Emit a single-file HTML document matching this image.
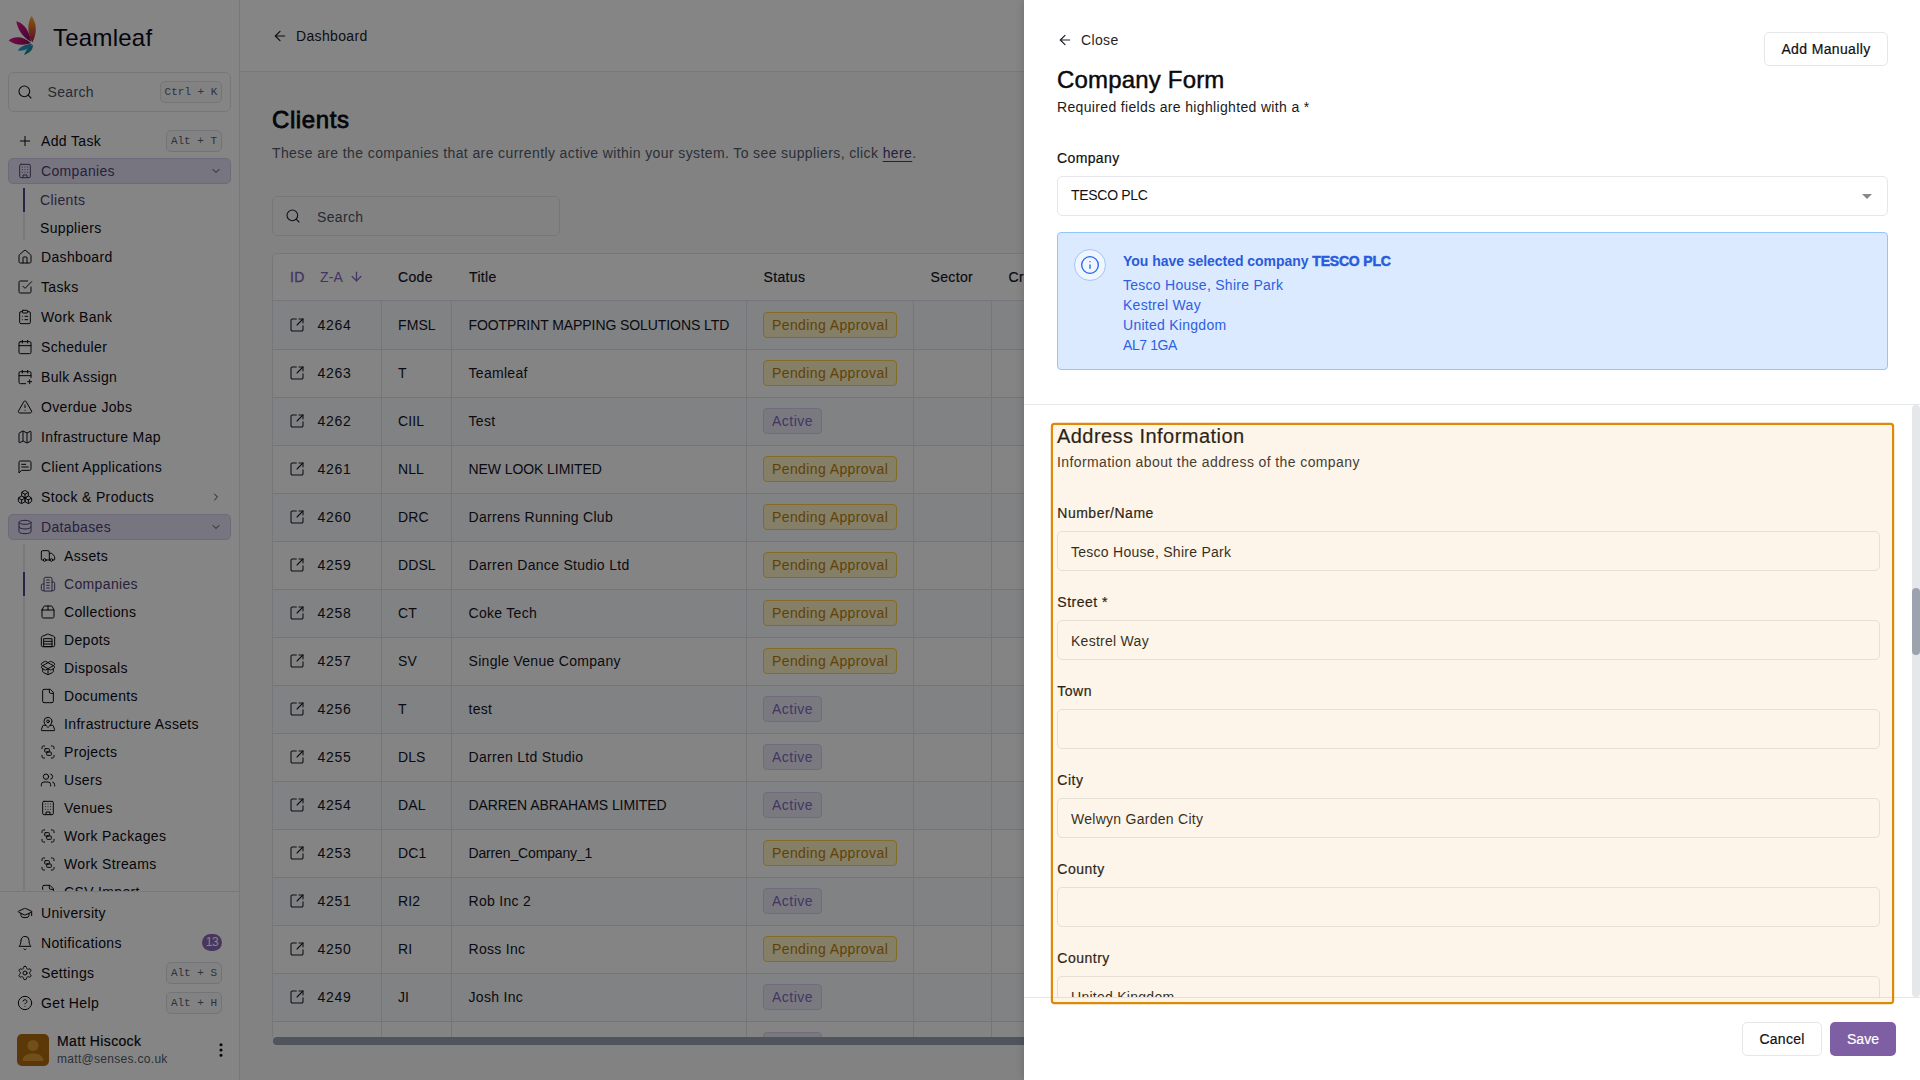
<!DOCTYPE html><html lang="en"><head><meta charset="utf-8"><title>Teamleaf - Clients</title><style>
*{box-sizing:border-box;margin:0;padding:0}
html,body{width:1920px;height:1080px;overflow:hidden;background:#fff}
body{font-family:"Liberation Sans",sans-serif;font-size:14px;line-height:20px;color:#0b0b14;letter-spacing:.35px;position:relative}
.abs{position:absolute}
svg.ic{display:block;flex:none}
.med{-webkit-text-stroke:.2px currentColor}
/* sidebar */
#sb{position:absolute;left:0;top:0;width:240px;height:1080px;background:#fff;border-right:1px solid #e5e7eb}
#logo{position:absolute;left:8px;top:16px}
#brand{position:absolute;left:53px;top:22px;font-size:24px;line-height:32px;letter-spacing:.25px;color:#0a0a1a}
#sbsearch{position:absolute;left:8px;top:72px;width:223px;height:40px;border:1px solid #e2e4ea;border-radius:6px;color:#4b5263}
#sbsearch svg{position:absolute;left:8px;top:11px;color:#15151f}
#sbsearch span.t{position:absolute;left:38.500px;top:9px}
kbd{position:absolute;font-family:"Liberation Mono",monospace;font-size:11px;line-height:21px;letter-spacing:0;color:#5b6170;border:1px solid #dcdfe6;border-radius:5px;height:22px;text-align:center;background:#fafafb}
.nav{position:absolute;left:8px;width:223px;height:26px;border-radius:5px;display:flex;align-items:center;padding-left:8px;color:#0b0b14;border:1px solid transparent}
.nav .ic{margin-right:8px}
.nav.act{background:#e5e0f3;border-color:#d3cbec;color:#4f4175}
.nav .chev{position:absolute;right:8px;top:6px;color:#3a3a4a;margin:0}
.sub{position:absolute;height:24px;display:flex;align-items:center;color:#0b0b14}
.sub .ic{margin-right:8px}
.sub.act{color:#4f4175}
.rail{position:absolute;left:23px;width:2px;background:#e9eaef}
.bar{position:absolute;left:23px;width:2px;background:#54407f}
#sbline{position:absolute;left:0;top:891px;width:239px;height:1px;background:#e5e7eb}
#sbclip{position:absolute;left:0;top:128px;width:239px;height:763px;overflow:hidden}
#badge{position:absolute;left:202px;top:934px;width:20px;height:17px;border-radius:9px;background:#8968b5;color:#fff;font-size:12px;line-height:17px;text-align:center;letter-spacing:-.5px}
#avatar{position:absolute;left:17px;top:1034px;width:32px;height:32px;border-radius:5px;background:#b06c12;overflow:hidden}
#uname{position:absolute;left:57px;top:1031px;color:#0b0b14}
#umail{position:absolute;left:57px;top:1050px;font-size:12px;line-height:18px;color:#565c6b;letter-spacing:.3px}
/* main */
#main{position:absolute;left:240px;top:0;width:1680px;height:1080px;background:#f9fafb}
#hdr{position:absolute;left:0;top:0;width:1680px;height:72px;background:#fff;border-bottom:1px solid #e5e7eb}
#back{position:absolute;left:31.500px;top:28px;color:#1c1c28}
#backt{position:absolute;left:56px;top:26px;color:#1c1c28}
#h1{position:absolute;left:32px;top:104px;font-size:24px;line-height:32px;font-weight:400;letter-spacing:.6px;color:#0a0a14;-webkit-text-stroke:.8px currentColor}
#subt{position:absolute;left:32px;top:143px;color:#555b69;letter-spacing:.39px;white-space:nowrap}
#subt a{color:#4a3a78;text-decoration:underline;text-underline-offset:3px}
#msearch{position:absolute;left:32px;top:196px;width:288px;height:40px;border:1px solid #e2e4ea;border-radius:5px;background:#fafafb;color:#4b5263}
#msearch svg{position:absolute;left:12px;top:11px;color:#1c1c28}
#msearch span{position:absolute;left:44px;top:10px}
#tbl{isolation:isolate;position:absolute;left:32px;top:253px;width:1640px;height:784px;border:1px solid #e2e4ea;border-radius:5px 5px 0 0;border-bottom:none;overflow:hidden;background:#f6f7fa}
#thead{position:absolute;left:0;top:0;width:100%;height:47px;background:#fff;border-bottom:1px solid #e2e4ea}
#thead span{position:absolute;top:13px;color:#14141e}
.tr{position:absolute;left:0;width:100%;height:48px;border-bottom:1px solid #dfe1e7;background:#fefefe}
.tr.o{background:#f7f9fc}
.tr span{position:absolute;top:13px;white-space:nowrap;color:#14141e}
.tr svg{position:absolute;left:16px;top:15px;color:#1c1c28}
.vl{position:absolute;z-index:2;top:47px;width:1px;height:740px;background:#e0e2e8}
.bdg{position:absolute;left:490px;top:10px;height:26px;border-radius:4px;line-height:24px;padding:0 8px;border:1px solid;white-space:nowrap}
.bdg.p{background:#fdf3c4;border-color:#fbd149;color:#bd7f0e;letter-spacing:.4px}
.bdg.a{background:#ece8f6;border-color:#d6cdef;color:#7e68c0;letter-spacing:.5px}
#hsb{position:absolute;left:33px;top:1037px;width:1640px;height:8px;border-radius:4px;background:#9aa1b2}
/* overlay */
#ov{position:absolute;left:0;top:0;width:1024px;height:1080px;background:rgba(0,0,0,.478)}
/* panel */
#pn{position:absolute;left:1024px;top:0;width:896px;height:1080px;background:#fff;box-shadow:-2px 0 6px rgba(0,0,0,.12)}
#close{position:absolute;left:33px;top:32px;color:#1f1f28}
#closet{position:absolute;left:57px;top:30px;color:#1f1f28}
#addm{position:absolute;left:740px;top:32px;width:124px;height:34px;border:1px solid #e5e7eb;border-radius:5px;text-align:center;line-height:32px;color:#111;letter-spacing:.36px}
#ptitle{position:absolute;left:33px;top:64px;font-size:24px;line-height:32px;color:#0a0a0a;letter-spacing:.18px;-webkit-text-stroke:.45px currentColor}
#preq{position:absolute;left:33px;top:97px;color:#1a1a1a;letter-spacing:.34px}
#lcomp{position:absolute;left:33px;top:148px;color:#111;letter-spacing:.37px}
#sel{position:absolute;left:33px;top:176px;width:831px;height:40px;border:1px solid #e5e7eb;border-radius:5px}
#sel span{position:absolute;left:13px;top:8px;letter-spacing:-.3px;color:#111}
#sel i{position:absolute;right:15px;top:17px;width:0;height:0;border-left:5px solid transparent;border-right:5px solid transparent;border-top:5px solid #888}
#info{position:absolute;left:33px;top:232px;width:831px;height:138px;border:1px solid #93c5fd;border-radius:4px;background:#dbeafe;color:#2f5fe0}
#info .circ{position:absolute;left:16px;top:16px;width:32px;height:32px;border-radius:16px;background:#eff6ff;border:1px solid #a3c4fb;color:#2563eb}
#info .circ svg{position:absolute;left:5px;top:5px}
#info b{position:absolute;left:65px;top:18px;font-weight:700;letter-spacing:-.04px;white-space:nowrap;color:#2a5bdc}
#info p{position:absolute;left:65px;white-space:nowrap;letter-spacing:.27px}
#pdiv{position:absolute;left:0;top:404px;width:896px;height:1px;background:#e5e7eb}
#scr{position:absolute;left:0;top:405px;width:896px;height:592px;overflow:hidden}
#sbt{position:absolute;left:888px;top:405px;width:8px;height:592px;background:#e5e7eb;border-radius:4px}
#sbth{position:absolute;left:888px;top:588px;width:8px;height:67px;background:#9ca3af;border-radius:4px}
#fdiv{position:absolute;left:0;top:997px;width:896px;height:1px;background:#e5e7eb}
#atitle{position:absolute;left:33px;top:17px;font-size:20px;line-height:28px;color:#151515;letter-spacing:.45px;-webkit-text-stroke:.2px currentColor}
#asub{position:absolute;left:33px;top:47px;color:#333;letter-spacing:.39px}
.fl{position:absolute;left:33.300px;color:#151515;letter-spacing:.5px}
.fi{position:absolute;left:33px;width:823px;height:40px;border:1px solid #e5e7eb;border-radius:5px;background:#fff}
.fi span{position:absolute;left:13px;top:10px;color:#1f1f1f;white-space:nowrap;letter-spacing:.27px}
#cancel{position:absolute;left:718px;top:1022px;width:80px;height:34px;border:1px solid #e5e7eb;border-radius:5px;text-align:center;line-height:32px;color:#111;letter-spacing:.25px}
#save{position:absolute;left:806px;top:1022px;width:66px;height:34px;border-radius:5px;text-align:center;line-height:34px;color:#fff;background:#7e5fa3;letter-spacing:.05px}
#hl{position:absolute;left:1053.200px;top:425.100px;width:838.500px;height:576.700px;box-shadow:0 0 0 2.200px #dc8a08;border-radius:1.500px;background:rgba(235,155,35,.1)}
</style></head><body>
<aside id="sb">
<svg id="logo" width="28" height="40" viewBox="8 16 28 40">
<defs>
<linearGradient id="g1" x1="0" y1="0" x2="0" y2="1"><stop offset="0" stop-color="#fbb21a"/><stop offset=".45" stop-color="#e0682c"/><stop offset="1" stop-color="#a3174f"/></linearGradient>
<linearGradient id="g2" x1="0" y1="0" x2="1" y2="1"><stop offset="0" stop-color="#e0168f"/><stop offset="1" stop-color="#7a0d55"/></linearGradient>
<linearGradient id="g3" x1="0" y1="0" x2="1" y2="0"><stop offset="0" stop-color="#e0168f"/><stop offset="1" stop-color="#8a0c4c"/></linearGradient>
<linearGradient id="g4" x1="0" y1="1" x2="1" y2="0"><stop offset="0" stop-color="#1aa7d6"/><stop offset="1" stop-color="#2f7fb0"/></linearGradient>
<linearGradient id="g5" x1="0" y1="1" x2="1" y2="0"><stop offset="0" stop-color="#0f9c86"/><stop offset="1" stop-color="#2a7fb4"/></linearGradient>
</defs>
<path d="M31.600 16 C35.800 22 38.200 31 32.300 42.500 C27.300 33 27 23 31.600 16Z" fill="url(#g1)"/>
<path d="M16.300 21.200 C22 22.500 28.500 28 31.300 41.800 C22 37 17.800 29 16.300 21.200Z" fill="url(#g2)"/>
<path d="M8.600 40.400 C14 36 23 35.500 31 43.300 C22 46 14 44.500 8.600 40.400Z" fill="url(#g3)"/>
<path d="M17.900 50.500 C20 46.500 26 44 32 44 C29.500 49 23.500 51.500 17.900 50.500Z" fill="url(#g4)"/>
<path d="M24.100 54.900 C25.500 50.500 29 46.500 32.800 44.800 C33.500 49.500 29.500 53.500 24.100 54.900Z" fill="url(#g5)"/>
</svg>
<div id="brand">Teamleaf</div>
<div id="sbsearch"><svg class="ic" width="16" height="16" viewBox="0 0 24 24" fill="none" stroke="currentColor" stroke-width="1.6" stroke-linecap="round" stroke-linejoin="round" ><circle cx="11" cy="11" r="8"/><path d="m21 21-4.3-4.3"/></svg><span class="t">Search</span></div>
<kbd style="left:160px;top:81px;width:62px">Ctrl + K</kbd>
<div id="sbclip" style="top:0;height:891px">
<div class="nav" style="top:128px"><svg class="ic" width="16" height="16" viewBox="0 0 24 24" fill="none" stroke="currentColor" stroke-width="1.5" stroke-linecap="round" stroke-linejoin="round" ><path d="M5 12h14"/><path d="M12 5v14"/></svg><span>Add Task</span></div>
<kbd style="left:166px;top:130px;width:56px">Alt + T</kbd>
<div class="nav act" style="top:158px"><svg class="ic" width="16" height="16" viewBox="0 0 24 24" fill="none" stroke="currentColor" stroke-width="1.5" stroke-linecap="round" stroke-linejoin="round" ><rect width="16" height="20" x="4" y="2" rx="2" ry="2"/><path d="M9 22v-4h6v4"/><path d="M8 6h.01"/><path d="M16 6h.01"/><path d="M12 6h.01"/><path d="M12 10h.01"/><path d="M12 14h.01"/><path d="M16 10h.01"/><path d="M16 14h.01"/><path d="M8 10h.01"/><path d="M8 14h.01"/></svg><span>Companies</span><svg class="ic chev" width="12" height="12" viewBox="0 0 24 24" fill="none" stroke="currentColor" stroke-width="2" stroke-linecap="round" stroke-linejoin="round" ><path d="m6 9 6 6 6-6"/></svg></div>
<div class="rail" style="top:188px;height:52px"></div><div class="bar" style="top:188px;height:24px"></div>
<div class="sub act" style="left:40px;top:188px"><span>Clients</span></div>
<div class="sub" style="left:40px;top:216px"><span>Suppliers</span></div>
<div class="nav" style="top:244px"><svg class="ic" width="16" height="16" viewBox="0 0 24 24" fill="none" stroke="currentColor" stroke-width="1.5" stroke-linecap="round" stroke-linejoin="round" ><path d="M15 21v-8a1 1 0 0 0-1-1h-4a1 1 0 0 0-1 1v8"/><path d="M3 10a2 2 0 0 1 .709-1.528l7-5.999a2 2 0 0 1 2.582 0l7 5.999A2 2 0 0 1 21 10v9a2 2 0 0 1-2 2H5a2 2 0 0 1-2-2z"/></svg><span>Dashboard</span></div>
<div class="nav" style="top:274px"><svg class="ic" width="16" height="16" viewBox="0 0 24 24" fill="none" stroke="currentColor" stroke-width="1.5" stroke-linecap="round" stroke-linejoin="round" ><path d="m9 11 3 3L22 4"/><path d="M21 12v7a2 2 0 0 1-2 2H5a2 2 0 0 1-2-2V5a2 2 0 0 1 2-2h11"/></svg><span>Tasks</span></div>
<div class="nav" style="top:304px"><svg class="ic" width="16" height="16" viewBox="0 0 24 24" fill="none" stroke="currentColor" stroke-width="1.5" stroke-linecap="round" stroke-linejoin="round" ><rect width="8" height="4" x="8" y="2" rx="1" ry="1"/><path d="M16 4h2a2 2 0 0 1 2 2v14a2 2 0 0 1-2 2H6a2 2 0 0 1-2-2V6a2 2 0 0 1 2-2h2"/><path d="M12 11h4"/><path d="M12 16h4"/><path d="M8 11h.01"/><path d="M8 16h.01"/></svg><span>Work Bank</span></div>
<div class="nav" style="top:334px"><svg class="ic" width="16" height="16" viewBox="0 0 24 24" fill="none" stroke="currentColor" stroke-width="1.5" stroke-linecap="round" stroke-linejoin="round" ><path d="M8 2v4"/><path d="M16 2v4"/><rect width="18" height="18" x="3" y="4" rx="2"/><path d="M3 10h18"/></svg><span>Scheduler</span></div>
<div class="nav" style="top:364px"><svg class="ic" width="16" height="16" viewBox="0 0 24 24" fill="none" stroke="currentColor" stroke-width="1.5" stroke-linecap="round" stroke-linejoin="round" ><path d="M8 2v4"/><path d="M16 2v4"/><path d="M21 13V6a2 2 0 0 0-2-2H5a2 2 0 0 0-2 2v14a2 2 0 0 0 2 2h8"/><path d="M3 10h18"/><path d="M16 19h6"/><path d="M19 16v6"/></svg><span>Bulk Assign</span></div>
<div class="nav" style="top:394px"><svg class="ic" width="16" height="16" viewBox="0 0 24 24" fill="none" stroke="currentColor" stroke-width="1.5" stroke-linecap="round" stroke-linejoin="round" ><path d="m21.73 18-8-14a2 2 0 0 0-3.48 0l-8 14A2 2 0 0 0 4 21h16a2 2 0 0 0 1.73-3"/><path d="M12 9v4"/><path d="M12 17h.01"/></svg><span>Overdue Jobs</span></div>
<div class="nav" style="top:424px"><svg class="ic" width="16" height="16" viewBox="0 0 24 24" fill="none" stroke="currentColor" stroke-width="1.5" stroke-linecap="round" stroke-linejoin="round" ><path d="M14.106 5.553a2 2 0 0 0 1.788 0l3.659-1.83A1 1 0 0 1 21 4.619v12.764a1 1 0 0 1-.553.894l-4.553 2.277a2 2 0 0 1-1.788 0l-4.212-2.106a2 2 0 0 0-1.788 0l-3.659 1.83A1 1 0 0 1 3 19.381V6.618a1 1 0 0 1 .553-.894l4.553-2.277a2 2 0 0 1 1.788 0z"/><path d="M15 5.764v15"/><path d="M9 3.236v15"/></svg><span>Infrastructure Map</span></div>
<div class="nav" style="top:454px"><svg class="ic" width="16" height="16" viewBox="0 0 24 24" fill="none" stroke="currentColor" stroke-width="1.5" stroke-linecap="round" stroke-linejoin="round" ><path d="M21 15a2 2 0 0 1-2 2H7l-4 4V5a2 2 0 0 1 2-2h14a2 2 0 0 1 2 2z"/><path d="M13 8H7"/><path d="M17 12H7"/></svg><span>Client Applications</span></div>
<div class="nav" style="top:484px"><svg class="ic" width="16" height="16" viewBox="0 0 24 24" fill="none" stroke="currentColor" stroke-width="1.5" stroke-linecap="round" stroke-linejoin="round" ><path d="M2.97 12.92A2 2 0 0 0 2 14.63v3.24a2 2 0 0 0 .97 1.71l3 1.8a2 2 0 0 0 2.06 0L12 19v-5.500l-5-3-4.030 2.420Z"/><path d="m7 16.5-4.740-2.850"/><path d="m7 16.5 5-3"/><path d="M7 16.500v5.170"/><path d="M12 13.500V19l3.970 2.380a2 2 0 0 0 2.060 0l3-1.800a2 2 0 0 0 .970-1.710v-3.240a2 2 0 0 0-.970-1.710L17 10.500l-5 3Z"/><path d="m17 16.500-5-3"/><path d="m17 16.500 4.740-2.850"/><path d="M17 16.500v5.170"/><path d="M7.970 4.420A2 2 0 0 0 7 6.130v4.370l5 3 5-3V6.130a2 2 0 0 0-.970-1.710l-3-1.800a2 2 0 0 0-2.060 0l-3 1.800Z"/><path d="M12 8 7.260 5.150"/><path d="m12 8 4.740-2.850"/><path d="M12 13.500V8"/></svg><span>Stock &amp; Products</span><svg class="ic chev" width="12" height="12" viewBox="0 0 24 24" fill="none" stroke="currentColor" stroke-width="2" stroke-linecap="round" stroke-linejoin="round" ><path d="m9 18 6-6-6-6"/></svg></div>
<div class="nav act" style="top:514px"><svg class="ic" width="16" height="16" viewBox="0 0 24 24" fill="none" stroke="currentColor" stroke-width="1.5" stroke-linecap="round" stroke-linejoin="round" ><ellipse cx="12" cy="5" rx="9" ry="3"/><path d="M3 5V19A9 3 0 0 0 21 19V5"/><path d="M3 12A9 3 0 0 0 21 12"/></svg><span>Databases</span><svg class="ic chev" width="12" height="12" viewBox="0 0 24 24" fill="none" stroke="currentColor" stroke-width="2" stroke-linecap="round" stroke-linejoin="round" ><path d="m6 9 6 6 6-6"/></svg></div>
<div class="rail" style="top:544px;height:360px"></div><div class="bar" style="top:572px;height:24px"></div>
<div class="sub" style="left:40px;top:544px"><svg class="ic" width="16" height="16" viewBox="0 0 24 24" fill="none" stroke="currentColor" stroke-width="1.5" stroke-linecap="round" stroke-linejoin="round" ><path d="M14 18V6a2 2 0 0 0-2-2H4a2 2 0 0 0-2 2v11a1 1 0 0 0 1 1h2"/><path d="M15 18H9"/><path d="M19 18h2a1 1 0 0 0 1-1v-3.650a1 1 0 0 0-.220-.624l-3.480-4.350A1 1 0 0 0 17.520 8H14"/><circle cx="17" cy="18" r="2"/><circle cx="7" cy="18" r="2"/></svg><span>Assets</span></div>
<div class="sub act" style="left:40px;top:572px"><svg class="ic" width="16" height="16" viewBox="0 0 24 24" fill="none" stroke="currentColor" stroke-width="1.5" stroke-linecap="round" stroke-linejoin="round" ><path d="M6 22V4a2 2 0 0 1 2-2h8a2 2 0 0 1 2 2v18Z"/><path d="M6 12H4a2 2 0 0 0-2 2v6a2 2 0 0 0 2 2h2"/><path d="M18 9h2a2 2 0 0 1 2 2v9a2 2 0 0 1-2 2h-2"/><path d="M10 6h4"/><path d="M10 10h4"/><path d="M10 14h4"/><path d="M10 18h4"/></svg><span>Companies</span></div>
<div class="sub" style="left:40px;top:600px"><svg class="ic" width="16" height="16" viewBox="0 0 24 24" fill="none" stroke="currentColor" stroke-width="1.5" stroke-linecap="round" stroke-linejoin="round" ><path d="M3 9h18v10a2 2 0 0 1-2 2H5a2 2 0 0 1-2-2V9Z"/><path d="m3 9 2.450-4.900A2 2 0 0 1 7.240 3h9.520a2 2 0 0 1 1.800 1.100L21 9"/><path d="M12 3v6"/></svg><span>Collections</span></div>
<div class="sub" style="left:40px;top:628px"><svg class="ic" width="16" height="16" viewBox="0 0 24 24" fill="none" stroke="currentColor" stroke-width="1.5" stroke-linecap="round" stroke-linejoin="round" ><path d="M22 8.350V20a2 2 0 0 1-2 2H4a2 2 0 0 1-2-2V8.350A2 2 0 0 1 3.260 6.500l8-3.200a2 2 0 0 1 1.480 0l8 3.200A2 2 0 0 1 22 8.350Z"/><path d="M6 18h12"/><path d="M6 14h12"/><rect width="12" height="12" x="6" y="10"/></svg><span>Depots</span></div>
<div class="sub" style="left:40px;top:656px"><svg class="ic" width="16" height="16" viewBox="0 0 24 24" fill="none" stroke="currentColor" stroke-width="1.5" stroke-linecap="round" stroke-linejoin="round" ><path d="M12 22v-9"/><path d="M15.170 2.210a1.670 1.670 0 0 1 1.630 0L21 4.570a1.930 1.930 0 0 1 0 3.360L8.820 14.790a1.655 1.655 0 0 1-1.640 0L3 12.430a1.930 1.930 0 0 1 0-3.360z"/><path d="M20 13v3.870a2.060 2.060 0 0 1-1.110 1.830l-6 3.080a1.930 1.930 0 0 1-1.780 0l-6-3.080A2.060 2.060 0 0 1 4 16.870V13"/><path d="M21 12.430a1.930 1.930 0 0 0 0-3.360L8.830 2.200a1.640 1.640 0 0 0-1.630 0L3 4.570a1.930 1.930 0 0 0 0 3.360l12.180 6.860a1.636 1.636 0 0 0 1.630 0z"/></svg><span>Disposals</span></div>
<div class="sub" style="left:40px;top:684px"><svg class="ic" width="16" height="16" viewBox="0 0 24 24" fill="none" stroke="currentColor" stroke-width="1.5" stroke-linecap="round" stroke-linejoin="round" ><path d="M15 2H6a2 2 0 0 0-2 2v16a2 2 0 0 0 2 2h12a2 2 0 0 0 2-2V7Z"/><path d="M14 2v4a2 2 0 0 0 2 2h4"/></svg><span>Documents</span></div>
<div class="sub" style="left:40px;top:712px"><svg class="ic" width="16" height="16" viewBox="0 0 24 24" fill="none" stroke="currentColor" stroke-width="1.5" stroke-linecap="round" stroke-linejoin="round" ><path d="M18 8c0 3.613-3.869 7.429-5.393 8.795a1 1 0 0 1-1.214 0C9.870 15.429 6 11.613 6 8a6 6 0 0 1 12 0"/><circle cx="12" cy="8" r="2"/><path d="M8.714 14h-3.710a1 1 0 0 0-.948.683l-2.004 6A1 1 0 0 0 3 22h18a1 1 0 0 0 .948-1.316l-2-6a1 1 0 0 0-.949-.684h-3.712"/></svg><span>Infrastructure Assets</span></div>
<div class="sub" style="left:40px;top:740px"><svg class="ic" width="16" height="16" viewBox="0 0 24 24" fill="none" stroke="currentColor" stroke-width="1.5" stroke-linecap="round" stroke-linejoin="round" ><path d="M3 7V5c0-1.100.900-2 2-2h2"/><path d="M17 3h2c1.100 0 2 .900 2 2v2"/><path d="M21 17v2c0 1.100-.900 2-2 2h-2"/><path d="M7 21H5c-1.100 0-2-.900-2-2v-2"/><rect width="7" height="5" x="7" y="7" rx="1"/><rect width="7" height="5" x="10" y="12" rx="1"/></svg><span>Projects</span></div>
<div class="sub" style="left:40px;top:768px"><svg class="ic" width="16" height="16" viewBox="0 0 24 24" fill="none" stroke="currentColor" stroke-width="1.5" stroke-linecap="round" stroke-linejoin="round" ><path d="M16 21v-2a4 4 0 0 0-4-4H6a4 4 0 0 0-4 4v2"/><circle cx="9" cy="7" r="4"/><path d="M22 21v-2a4 4 0 0 0-3-3.870"/><path d="M16 3.130a4 4 0 0 1 0 7.750"/></svg><span>Users</span></div>
<div class="sub" style="left:40px;top:796px"><svg class="ic" width="16" height="16" viewBox="0 0 24 24" fill="none" stroke="currentColor" stroke-width="1.5" stroke-linecap="round" stroke-linejoin="round" ><rect width="16" height="20" x="4" y="2" rx="2" ry="2"/><path d="M9 22v-4h6v4"/><path d="M8 6h.01"/><path d="M16 6h.01"/><path d="M12 6h.01"/><path d="M12 10h.01"/><path d="M12 14h.01"/><path d="M16 10h.01"/><path d="M16 14h.01"/><path d="M8 10h.01"/><path d="M8 14h.01"/></svg><span>Venues</span></div>
<div class="sub" style="left:40px;top:824px"><svg class="ic" width="16" height="16" viewBox="0 0 24 24" fill="none" stroke="currentColor" stroke-width="1.5" stroke-linecap="round" stroke-linejoin="round" ><path d="M3 7V5c0-1.100.900-2 2-2h2"/><path d="M17 3h2c1.100 0 2 .900 2 2v2"/><path d="M21 17v2c0 1.100-.900 2-2 2h-2"/><path d="M7 21H5c-1.100 0-2-.900-2-2v-2"/><rect width="7" height="5" x="7" y="7" rx="1"/><rect width="7" height="5" x="10" y="12" rx="1"/></svg><span>Work Packages</span></div>
<div class="sub" style="left:40px;top:852px"><svg class="ic" width="16" height="16" viewBox="0 0 24 24" fill="none" stroke="currentColor" stroke-width="1.5" stroke-linecap="round" stroke-linejoin="round" ><path d="M3 7V5c0-1.100.900-2 2-2h2"/><path d="M17 3h2c1.100 0 2 .900 2 2v2"/><path d="M21 17v2c0 1.100-.900 2-2 2h-2"/><path d="M7 21H5c-1.100 0-2-.900-2-2v-2"/><rect width="7" height="5" x="7" y="7" rx="1"/><rect width="7" height="5" x="10" y="12" rx="1"/></svg><span>Work Streams</span></div>
<div class="sub" style="left:40px;top:880px"><svg class="ic" width="16" height="16" viewBox="0 0 24 24" fill="none" stroke="currentColor" stroke-width="1.5" stroke-linecap="round" stroke-linejoin="round" ><path d="M4 22h14a2 2 0 0 0 2-2V7l-5-5H6a2 2 0 0 0-2 2v4"/><path d="M14 2v4a2 2 0 0 0 2 2h4"/><path d="M2 15h10"/><path d="m9 18 3-3-3-3"/></svg><span>CSV Import</span></div>
</div>
<div id="sbline"></div>
<div class="nav" style="top:900px"><svg class="ic" width="16" height="16" viewBox="0 0 24 24" fill="none" stroke="currentColor" stroke-width="1.5" stroke-linecap="round" stroke-linejoin="round" ><path d="M21.420 10.922a1 1 0 0 0-.019-1.838L12.830 5.180a2 2 0 0 0-1.660 0L2.600 9.080a1 1 0 0 0 0 1.832l8.570 3.908a2 2 0 0 0 1.660 0z"/><path d="M22 10v6"/><path d="M6 12.500V16a6 3 0 0 0 12 0v-3.500"/></svg><span>University</span></div>
<div class="nav" style="top:930px"><svg class="ic" width="16" height="16" viewBox="0 0 24 24" fill="none" stroke="currentColor" stroke-width="1.5" stroke-linecap="round" stroke-linejoin="round" ><path d="M6 8a6 6 0 0 1 12 0c0 7 3 9 3 9H3s3-2 3-9"/><path d="M10.300 21a1.940 1.940 0 0 0 3.400 0"/></svg><span>Notifications</span></div>
<div id="badge">13</div>
<div class="nav" style="top:960px"><svg class="ic" width="16" height="16" viewBox="0 0 24 24" fill="none" stroke="currentColor" stroke-width="1.5" stroke-linecap="round" stroke-linejoin="round" ><path d="M12.220 2h-.440a2 2 0 0 0-2 2v.180a2 2 0 0 1-1 1.730l-.430.250a2 2 0 0 1-2 0l-.150-.080a2 2 0 0 0-2.730.730l-.220.380a2 2 0 0 0 .730 2.730l.150.100a2 2 0 0 1 1 1.720v.510a2 2 0 0 1-1 1.740l-.150.090a2 2 0 0 0-.730 2.730l.220.380a2 2 0 0 0 2.730.730l.150-.080a2 2 0 0 1 2 0l.430.250a2 2 0 0 1 1 1.730V20a2 2 0 0 0 2 2h.440a2 2 0 0 0 2-2v-.180a2 2 0 0 1 1-1.730l.430-.250a2 2 0 0 1 2 0l.150.080a2 2 0 0 0 2.730-.730l.220-.390a2 2 0 0 0-.730-2.730l-.150-.080a2 2 0 0 1-1-1.740v-.500a2 2 0 0 1 1-1.740l.150-.090a2 2 0 0 0 .730-2.730l-.220-.380a2 2 0 0 0-2.730-.730l-.150.080a2 2 0 0 1-2 0l-.430-.250a2 2 0 0 1-1-1.730V4a2 2 0 0 0-2-2z"/><circle cx="12" cy="12" r="3"/></svg><span>Settings</span></div>
<kbd style="left:166px;top:962px;width:56px">Alt + S</kbd>
<div class="nav" style="top:990px"><svg class="ic" width="16" height="16" viewBox="0 0 24 24" fill="none" stroke="currentColor" stroke-width="1.5" stroke-linecap="round" stroke-linejoin="round" ><circle cx="12" cy="12" r="10"/><path d="M9.090 9a3 3 0 0 1 5.830 1c0 2-3 3-3 3"/><path d="M12 17h.01"/></svg><span>Get Help</span></div>
<kbd style="left:166px;top:992px;width:56px">Alt + H</kbd>
<div id="avatar"><svg width="32" height="32" viewBox="0 0 32 32"><circle cx="16" cy="11.500" r="5.500" fill="#d9972f"/><path d="M5.500 27c0-5 4.500-7.500 10.500-7.500s10.500 2.500 10.500 7.500z" fill="#d9972f"/></svg></div>
<div id="uname" class="med">Matt Hiscock</div><div id="umail">matt@senses.co.uk</div>
<div class="abs" style="left:212px;top:1041px;color:#111"><svg class="ic" width="18" height="18" viewBox="0 0 24 24" fill="none" stroke="currentColor" stroke-width="2.2" stroke-linecap="round" stroke-linejoin="round" ><circle cx="12" cy="12" r="1"/><circle cx="12" cy="5" r="1"/><circle cx="12" cy="19" r="1"/></svg></div>
</aside>
<main id="main"><div id="hdr"><div id="back"><svg class="ic" width="16" height="16" viewBox="0 0 24 24" fill="none" stroke="currentColor" stroke-width="1.8" stroke-linecap="round" stroke-linejoin="round" ><path d="m12 19-7-7 7-7"/><path d="M19 12H5"/></svg></div><div id="backt">Dashboard</div></div>
<h1 id="h1">Clients</h1>
<p id="subt">These are the companies that are currently active within your system. To see suppliers, click <a>here</a>.</p>
<div id="msearch"><svg class="ic" width="16" height="16" viewBox="0 0 24 24" fill="none" stroke="currentColor" stroke-width="1.6" stroke-linecap="round" stroke-linejoin="round" ><circle cx="11" cy="11" r="8"/><path d="m21 21-4.3-4.3"/></svg><span>Search</span></div>
<div id="tbl"><div id="thead">
<span style="left:17px;color:#8066bc;-webkit-text-stroke:.3px #8066bc">ID</span><span style="left:47px;color:#8066bc;letter-spacing:.2px">Z-A</span>
<svg class="ic abs" style="left:76px;top:15px" width="15" height="15" viewBox="0 0 24 24" fill="none" stroke="#8066bc" stroke-width="2" stroke-linecap="round" stroke-linejoin="round"><path d="M12 5v14"/><path d="m19 12-7 7-7-7"/></svg>
<span class="med" style="left:125px">Code</span><span class="med" style="left:196px">Title</span><span class="med" style="left:490.500px">Status</span><span class="med" style="left:657.500px">Sector</span><span class="med" style="left:735.500px">Created</span></div>
<div class="vl" style="left:108px"></div>
<div class="vl" style="left:178px"></div>
<div class="vl" style="left:473px"></div>
<div class="vl" style="left:640px"></div>
<div class="vl" style="left:718px"></div>
<div class="tr o" style="top:48px"><svg class="ic" width="16" height="16" viewBox="0 0 24 24" fill="none" stroke="currentColor" stroke-width="1.6" stroke-linecap="round" stroke-linejoin="round" ><path d="M21 13v6a2 2 0 0 1-2 2H5a2 2 0 0 1-2-2V5a2 2 0 0 1 2-2h6"/><path d="m21 3-9 9"/><path d="M15 3h6v6"/></svg><span style="left:44.500px;letter-spacing:.75px">4264</span><span style="left:125px;letter-spacing:.1px">FMSL</span><span style="left:195.500px;letter-spacing:-.08px">FOOTPRINT MAPPING SOLUTIONS LTD</span>
<div class="bdg p">Pending Approval</div></div>
<div class="tr" style="top:96px"><svg class="ic" width="16" height="16" viewBox="0 0 24 24" fill="none" stroke="currentColor" stroke-width="1.6" stroke-linecap="round" stroke-linejoin="round" ><path d="M21 13v6a2 2 0 0 1-2 2H5a2 2 0 0 1-2-2V5a2 2 0 0 1 2-2h6"/><path d="m21 3-9 9"/><path d="M15 3h6v6"/></svg><span style="left:44.500px;letter-spacing:.75px">4263</span><span style="left:125px;letter-spacing:.1px">T</span><span style="left:195.500px;letter-spacing:.3px">Teamleaf</span>
<div class="bdg p">Pending Approval</div></div>
<div class="tr o" style="top:144px"><svg class="ic" width="16" height="16" viewBox="0 0 24 24" fill="none" stroke="currentColor" stroke-width="1.6" stroke-linecap="round" stroke-linejoin="round" ><path d="M21 13v6a2 2 0 0 1-2 2H5a2 2 0 0 1-2-2V5a2 2 0 0 1 2-2h6"/><path d="m21 3-9 9"/><path d="M15 3h6v6"/></svg><span style="left:44.500px;letter-spacing:.75px">4262</span><span style="left:125px;letter-spacing:.1px">CIIL</span><span style="left:195.500px;letter-spacing:.3px">Test</span>
<div class="bdg a">Active</div></div>
<div class="tr" style="top:192px"><svg class="ic" width="16" height="16" viewBox="0 0 24 24" fill="none" stroke="currentColor" stroke-width="1.6" stroke-linecap="round" stroke-linejoin="round" ><path d="M21 13v6a2 2 0 0 1-2 2H5a2 2 0 0 1-2-2V5a2 2 0 0 1 2-2h6"/><path d="m21 3-9 9"/><path d="M15 3h6v6"/></svg><span style="left:44.500px;letter-spacing:.75px">4261</span><span style="left:125px;letter-spacing:.1px">NLL</span><span style="left:195.500px;letter-spacing:-.08px">NEW LOOK LIMITED</span>
<div class="bdg p">Pending Approval</div></div>
<div class="tr o" style="top:240px"><svg class="ic" width="16" height="16" viewBox="0 0 24 24" fill="none" stroke="currentColor" stroke-width="1.6" stroke-linecap="round" stroke-linejoin="round" ><path d="M21 13v6a2 2 0 0 1-2 2H5a2 2 0 0 1-2-2V5a2 2 0 0 1 2-2h6"/><path d="m21 3-9 9"/><path d="M15 3h6v6"/></svg><span style="left:44.500px;letter-spacing:.75px">4260</span><span style="left:125px;letter-spacing:.1px">DRC</span><span style="left:195.500px;letter-spacing:.3px">Darrens Running Club</span>
<div class="bdg p">Pending Approval</div></div>
<div class="tr" style="top:288px"><svg class="ic" width="16" height="16" viewBox="0 0 24 24" fill="none" stroke="currentColor" stroke-width="1.6" stroke-linecap="round" stroke-linejoin="round" ><path d="M21 13v6a2 2 0 0 1-2 2H5a2 2 0 0 1-2-2V5a2 2 0 0 1 2-2h6"/><path d="m21 3-9 9"/><path d="M15 3h6v6"/></svg><span style="left:44.500px;letter-spacing:.75px">4259</span><span style="left:125px;letter-spacing:.1px">DDSL</span><span style="left:195.500px;letter-spacing:.3px">Darren Dance Studio Ltd</span>
<div class="bdg p">Pending Approval</div></div>
<div class="tr o" style="top:336px"><svg class="ic" width="16" height="16" viewBox="0 0 24 24" fill="none" stroke="currentColor" stroke-width="1.6" stroke-linecap="round" stroke-linejoin="round" ><path d="M21 13v6a2 2 0 0 1-2 2H5a2 2 0 0 1-2-2V5a2 2 0 0 1 2-2h6"/><path d="m21 3-9 9"/><path d="M15 3h6v6"/></svg><span style="left:44.500px;letter-spacing:.75px">4258</span><span style="left:125px;letter-spacing:.1px">CT</span><span style="left:195.500px;letter-spacing:.3px">Coke Tech</span>
<div class="bdg p">Pending Approval</div></div>
<div class="tr" style="top:384px"><svg class="ic" width="16" height="16" viewBox="0 0 24 24" fill="none" stroke="currentColor" stroke-width="1.6" stroke-linecap="round" stroke-linejoin="round" ><path d="M21 13v6a2 2 0 0 1-2 2H5a2 2 0 0 1-2-2V5a2 2 0 0 1 2-2h6"/><path d="m21 3-9 9"/><path d="M15 3h6v6"/></svg><span style="left:44.500px;letter-spacing:.75px">4257</span><span style="left:125px;letter-spacing:.1px">SV</span><span style="left:195.500px;letter-spacing:.3px">Single Venue Company</span>
<div class="bdg p">Pending Approval</div></div>
<div class="tr o" style="top:432px"><svg class="ic" width="16" height="16" viewBox="0 0 24 24" fill="none" stroke="currentColor" stroke-width="1.6" stroke-linecap="round" stroke-linejoin="round" ><path d="M21 13v6a2 2 0 0 1-2 2H5a2 2 0 0 1-2-2V5a2 2 0 0 1 2-2h6"/><path d="m21 3-9 9"/><path d="M15 3h6v6"/></svg><span style="left:44.500px;letter-spacing:.75px">4256</span><span style="left:125px;letter-spacing:.1px">T</span><span style="left:195.500px;letter-spacing:.3px">test</span>
<div class="bdg a">Active</div></div>
<div class="tr" style="top:480px"><svg class="ic" width="16" height="16" viewBox="0 0 24 24" fill="none" stroke="currentColor" stroke-width="1.6" stroke-linecap="round" stroke-linejoin="round" ><path d="M21 13v6a2 2 0 0 1-2 2H5a2 2 0 0 1-2-2V5a2 2 0 0 1 2-2h6"/><path d="m21 3-9 9"/><path d="M15 3h6v6"/></svg><span style="left:44.500px;letter-spacing:.75px">4255</span><span style="left:125px;letter-spacing:.1px">DLS</span><span style="left:195.500px;letter-spacing:.3px">Darren Ltd Studio</span>
<div class="bdg a">Active</div></div>
<div class="tr o" style="top:528px"><svg class="ic" width="16" height="16" viewBox="0 0 24 24" fill="none" stroke="currentColor" stroke-width="1.6" stroke-linecap="round" stroke-linejoin="round" ><path d="M21 13v6a2 2 0 0 1-2 2H5a2 2 0 0 1-2-2V5a2 2 0 0 1 2-2h6"/><path d="m21 3-9 9"/><path d="M15 3h6v6"/></svg><span style="left:44.500px;letter-spacing:.75px">4254</span><span style="left:125px;letter-spacing:.1px">DAL</span><span style="left:195.500px;letter-spacing:-.08px">DARREN ABRAHAMS LIMITED</span>
<div class="bdg a">Active</div></div>
<div class="tr" style="top:576px"><svg class="ic" width="16" height="16" viewBox="0 0 24 24" fill="none" stroke="currentColor" stroke-width="1.6" stroke-linecap="round" stroke-linejoin="round" ><path d="M21 13v6a2 2 0 0 1-2 2H5a2 2 0 0 1-2-2V5a2 2 0 0 1 2-2h6"/><path d="m21 3-9 9"/><path d="M15 3h6v6"/></svg><span style="left:44.500px;letter-spacing:.75px">4253</span><span style="left:125px;letter-spacing:.1px">DC1</span><span style="left:195.500px;letter-spacing:-.15px">Darren_Company_1</span>
<div class="bdg p">Pending Approval</div></div>
<div class="tr o" style="top:624px"><svg class="ic" width="16" height="16" viewBox="0 0 24 24" fill="none" stroke="currentColor" stroke-width="1.6" stroke-linecap="round" stroke-linejoin="round" ><path d="M21 13v6a2 2 0 0 1-2 2H5a2 2 0 0 1-2-2V5a2 2 0 0 1 2-2h6"/><path d="m21 3-9 9"/><path d="M15 3h6v6"/></svg><span style="left:44.500px;letter-spacing:.75px">4251</span><span style="left:125px;letter-spacing:.1px">RI2</span><span style="left:195.500px;letter-spacing:.3px">Rob Inc 2</span>
<div class="bdg a">Active</div></div>
<div class="tr" style="top:672px"><svg class="ic" width="16" height="16" viewBox="0 0 24 24" fill="none" stroke="currentColor" stroke-width="1.6" stroke-linecap="round" stroke-linejoin="round" ><path d="M21 13v6a2 2 0 0 1-2 2H5a2 2 0 0 1-2-2V5a2 2 0 0 1 2-2h6"/><path d="m21 3-9 9"/><path d="M15 3h6v6"/></svg><span style="left:44.500px;letter-spacing:.75px">4250</span><span style="left:125px;letter-spacing:.1px">RI</span><span style="left:195.500px;letter-spacing:.3px">Ross Inc</span>
<div class="bdg p">Pending Approval</div></div>
<div class="tr o" style="top:720px"><svg class="ic" width="16" height="16" viewBox="0 0 24 24" fill="none" stroke="currentColor" stroke-width="1.6" stroke-linecap="round" stroke-linejoin="round" ><path d="M21 13v6a2 2 0 0 1-2 2H5a2 2 0 0 1-2-2V5a2 2 0 0 1 2-2h6"/><path d="m21 3-9 9"/><path d="M15 3h6v6"/></svg><span style="left:44.500px;letter-spacing:.75px">4249</span><span style="left:125px;letter-spacing:.1px">JI</span><span style="left:195.500px;letter-spacing:.3px">Josh Inc</span>
<div class="bdg a">Active</div></div>
<div class="tr" style="top:768px"><svg class="ic" width="16" height="16" viewBox="0 0 24 24" fill="none" stroke="currentColor" stroke-width="1.6" stroke-linecap="round" stroke-linejoin="round" ><path d="M21 13v6a2 2 0 0 1-2 2H5a2 2 0 0 1-2-2V5a2 2 0 0 1 2-2h6"/><path d="m21 3-9 9"/><path d="M15 3h6v6"/></svg><span style="left:44.500px;letter-spacing:.75px">4248</span><span style="left:125px;letter-spacing:.1px">JC</span><span style="left:195.500px;letter-spacing:.3px">Josh Co</span>
<div class="bdg a">Active</div></div>
</div><div id="hsb"></div></main>
<div id="ov"></div>
<section id="pn">
<div id="close"><svg class="ic" width="16" height="16" viewBox="0 0 24 24" fill="none" stroke="currentColor" stroke-width="1.8" stroke-linecap="round" stroke-linejoin="round" ><path d="m12 19-7-7 7-7"/><path d="M19 12H5"/></svg></div><div id="closet">Close</div>
<div id="addm" class="med">Add Manually</div>
<h2 id="ptitle" style="font-weight:400">Company Form</h2><p id="preq">Required fields are highlighted with a *</p>
<label id="lcomp" class="med">Company</label>
<div id="sel"><span>TESCO PLC</span><i></i></div>
<div id="info"><div class="circ"><svg class="ic" width="20" height="20" viewBox="0 0 24 24" fill="none" stroke="currentColor" stroke-width="1.6" stroke-linecap="round" stroke-linejoin="round" ><circle cx="12" cy="12" r="10"/><path d="M12 16v-4"/><path d="M12 8h.01"/></svg></div><b>You have selected company <strong style="-webkit-text-stroke:.5px currentColor;letter-spacing:-.2px">TESCO PLC</strong></b>
<p style="top:42px">Tesco House, Shire Park</p>
<p style="top:62px">Kestrel Way</p>
<p style="top:82px">United Kingdom</p>
<p style="top:102px;letter-spacing:-.4px">AL7 1GA</p>
</div><div id="pdiv"></div>
<div id="scr"><h3 id="atitle" style="font-weight:400">Address Information</h3><p id="asub">Information about the address of the company</p>
<label class="fl med" style="top:98px">Number/Name</label><div class="fi" style="top:126px"><span>Tesco House, Shire Park</span></div>
<label class="fl med" style="top:187px">Street *</label><div class="fi" style="top:215px"><span>Kestrel Way</span></div>
<label class="fl med" style="top:276px">Town</label><div class="fi" style="top:304px"><span></span></div>
<label class="fl med" style="top:365px">City</label><div class="fi" style="top:393px"><span>Welwyn Garden City</span></div>
<label class="fl med" style="top:454px">County</label><div class="fi" style="top:482px"><span></span></div>
<label class="fl med" style="top:543px">Country</label><div class="fi" style="top:571px"><span>United Kingdom</span></div>
</div><div id="sbt"></div><div id="sbth"></div><div id="fdiv"></div>
<div id="cancel" class="med">Cancel</div><div id="save" class="med">Save</div>
</section>
<div id="hl"></div>
</body></html>
